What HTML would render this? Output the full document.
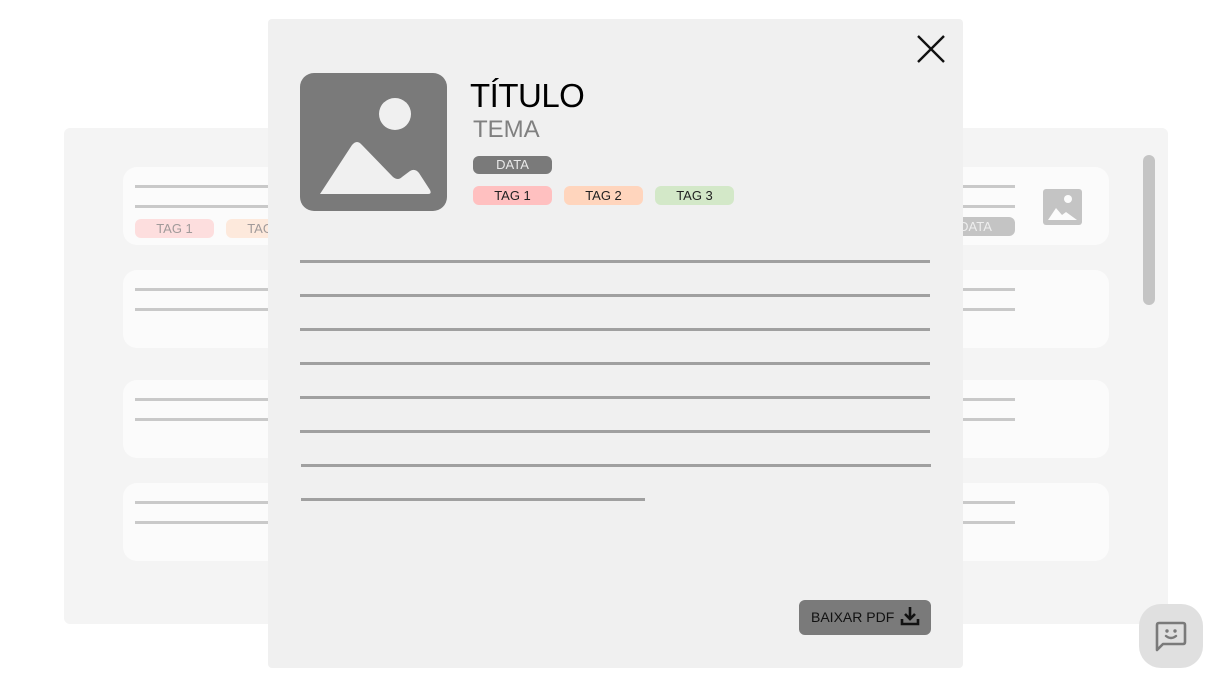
<!DOCTYPE html>
<html><head><meta charset="utf-8"><style>
*{margin:0;padding:0;box-sizing:border-box}
body{width:1232px;height:688px;background:#fff;position:relative;overflow:hidden;font-family:"Liberation Sans",sans-serif}
.a{position:absolute}
.bg{left:64px;top:128px;width:1104px;height:496px;background:#f4f4f4;border-radius:6px}
.card{left:123px;width:986px;height:78px;background:#fbfbfb;border-radius:14px}
.ln{height:3px;background:#c9c9c9}
.pill{border-radius:6px;font-size:13px;text-align:center;line-height:19px;height:19px;width:79px}
.ml{left:300px;width:630px;height:3px;background:#a0a0a0}
</style></head><body>
<div class="a bg"></div>
<div class="a card" style="top:167px"></div>
<div class="a card" style="top:270px"></div>
<div class="a card" style="top:380px"></div>
<div class="a card" style="top:483px"></div>
<div class="a ln" style="left:135px;top:185px;width:880px"></div>
<div class="a ln" style="left:135px;top:205px;width:880px"></div>
<div class="a ln" style="left:135px;top:288px;width:880px"></div>
<div class="a ln" style="left:135px;top:308px;width:880px"></div>
<div class="a ln" style="left:135px;top:398px;width:880px"></div>
<div class="a ln" style="left:135px;top:418px;width:880px"></div>
<div class="a ln" style="left:135px;top:501px;width:880px"></div>
<div class="a ln" style="left:135px;top:521px;width:880px"></div>
<div class="a pill" style="left:135px;top:219px;background:#fddede;color:#a09a9a">TAG 1</div>
<div class="a pill" style="left:226px;top:219px;background:#fde9dc;color:#a09a9a">TAG 2</div>
<div class="a pill" style="left:936px;top:217px;background:#c4c4c4;color:#eee">DATA</div>
<svg class="a" style="left:1043px;top:189px" width="39" height="36" viewBox="0 0 39 36"><rect width="39" height="36" rx="3" fill="#c4c4c4"/><circle cx="25" cy="10" r="4" fill="#fbfbfb"/><path d="M5 31 L13 19 L19 26 L23 23 L34 31 Z" fill="#fbfbfb"/></svg>
<div class="a" style="left:1143px;top:155px;width:12px;height:150px;background:#c4c4c4;border-radius:6px"></div>

<div class="a" style="left:268px;top:19px;width:695px;height:649px;background:#f0f0f0;border-radius:4px"></div>
<svg class="a" style="left:915px;top:33px" width="32" height="32"><path d="M3 3L29 29M29 3L3 29" stroke="#111" stroke-width="2.4"/></svg>
<svg class="a" style="left:300px;top:73px" width="147" height="138" viewBox="0 0 147 138"><rect width="147" height="138" rx="14" fill="#7a7a7a"/><circle cx="95" cy="41" r="16" fill="#f0f0f0"/><path d="M20 121 L52 72 Q57 66 62 72 L93 104 Q98 108 102 104 L110 98 Q115 95 119 100 L130 117 Q132 121 128 121 Z" fill="#f0f0f0"/></svg>
<div class="a" style="left:470px;top:77px;font-size:33px;letter-spacing:-0.5px;color:#000">TÍTULO</div>
<div class="a" style="left:473px;top:116px;font-size:24px;color:#808080">TEMA</div>
<div class="a pill" style="left:473px;top:156px;height:18px;line-height:18px;background:#7a7a7a;color:#e8e8e8">DATA</div>
<div class="a pill" style="left:473px;top:186px;background:#ffc0c0;color:#222">TAG 1</div>
<div class="a pill" style="left:564px;top:186px;background:#ffd5bd;color:#222">TAG 2</div>
<div class="a pill" style="left:655px;top:186px;background:#d3e8c8;color:#222">TAG 3</div>
<div class="a ml" style="top:260px"></div>
<div class="a ml" style="top:294px"></div>
<div class="a ml" style="top:328px"></div>
<div class="a ml" style="top:362px"></div>
<div class="a ml" style="top:396px"></div>
<div class="a ml" style="top:430px"></div>
<div class="a ml" style="top:464px;left:301px"></div>
<div class="a ml" style="top:498px;left:301px;width:344px"></div>
<div class="a" style="left:799px;top:600px;width:132px;height:35px;background:#7a7a7a;border-radius:6px;font-size:14px;color:#111;line-height:35px;padding-left:12px">BAIXAR PDF</div>
<svg class="a" style="left:899px;top:605px" width="22" height="22" viewBox="0 0 22 22"><path d="M11 2V14M6 9L11 14L16 9" stroke="#111" stroke-width="2.6" fill="none"/><path d="M3 14V19H19V14" stroke="#111" stroke-width="2.6" fill="none"/></svg>
<div class="a" style="left:1139px;top:604px;width:64px;height:64px;background:#e0e0e0;border-radius:22px"></div>
<svg class="a" style="left:1154px;top:620px" width="34" height="34" viewBox="0 0 34 34"><path d="M3 30V5Q3 3 5 3H29Q31 3 31 5V22Q31 24 29 24H9Z" stroke="#7a7a7a" stroke-width="2.6" fill="none" stroke-linejoin="round"/><circle cx="13" cy="11" r="1.7" fill="#7a7a7a"/><circle cx="21" cy="11" r="1.7" fill="#7a7a7a"/><path d="M12 16Q17 20 22 16" stroke="#7a7a7a" stroke-width="2.4" fill="none" stroke-linecap="round"/></svg>
</body></html>
